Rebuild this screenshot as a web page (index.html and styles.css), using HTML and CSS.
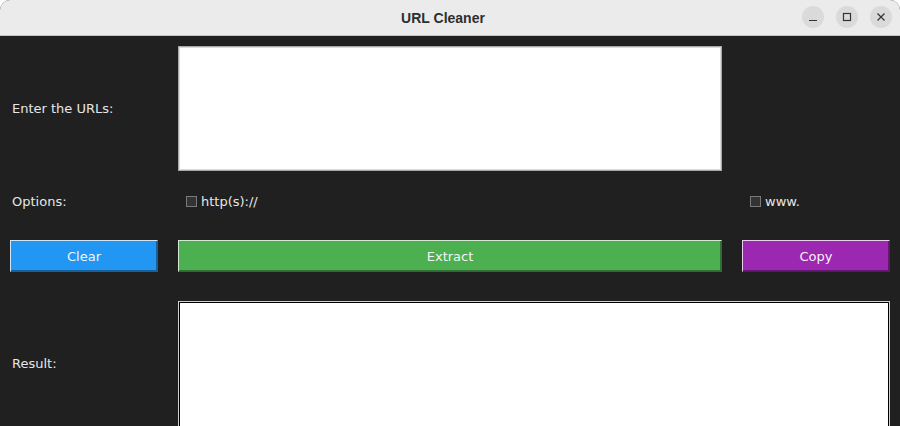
FILE: index.html
```html
<!DOCTYPE html>
<html>
<head>
<meta charset="utf-8">
<link rel="stylesheet" href="styles.css">
</head>
<body>
<div class="window">
  <div class="titlebar">
    <div class="title">URL Cleaner</div>
    <div class="controls">
      <div class="ctl"><svg width="10" height="10" viewBox="0 0 10 10"><path d="M1 8.5 H9" stroke="#333" stroke-width="1.2"/></svg></div>
      <div class="ctl"><svg width="10" height="10" viewBox="0 0 10 10"><rect x="1.5" y="1.5" width="7" height="7" fill="none" stroke="#333" stroke-width="1.2"/></svg></div>
      <div class="ctl"><svg width="10" height="10" viewBox="0 0 10 10"><path d="M1.5 1.5 L8.5 8.5 M8.5 1.5 L1.5 8.5" stroke="#333" stroke-width="1.2"/></svg></div>
    </div>
  </div>
  <div class="content">
    <div class="label r1 c1">Enter the URLs:</div>
    <div class="input-box r1 c2"></div>

    <div class="label opt r2 c1">Options:</div>
    <div class="check opt r2 c2"><span class="box"></span>http(s)://</div>
    <div class="check opt r2 c3"><span class="box"></span>www.</div>

    <div class="btn clear r3 c1">Clear</div>
    <div class="btn extract r3 c2">Extract</div>
    <div class="btn copy r3 c3">Copy</div>

    <div class="label result r4 c1">Result:</div>
    <div class="result-box result r4"></div>
  </div>
</div>
</body>
</html>
```
FILE: styles.css
```css
html, body {
  margin: 0;
  padding: 0;
  background: #ffffff;
  width: 900px;
  height: 426px;
  overflow: hidden;
}
.window {
  width: 900px;
  height: 426px;
  background: #202020;
  border-radius: 10px 10px 0 0;
  overflow: hidden;
  font-family: "DejaVu Sans", "Liberation Sans", sans-serif;
}
.titlebar {
  height: 35px;
  background: #ebebeb;
  border-bottom: 1px solid #c4c4c4;
  display: flex;
  align-items: center;
  justify-content: center;
  position: relative;
}
.title {
  font-family: "Liberation Sans", "DejaVu Sans", sans-serif;
  font-weight: bold;
  font-size: 14px;
  color: #2e2e2e;
  margin-left: -14px;
}
.controls {
  position: absolute;
  right: 8px;
  top: 6px;
  display: flex;
  gap: 12px;
}
.ctl {
  width: 22px;
  height: 22px;
  border-radius: 50%;
  background: #dadada;
  display: flex;
  align-items: center;
  justify-content: center;
}
.content {
  display: grid;
  grid-template-columns: 148px 544px 148px;
  column-gap: 20px;
  grid-template-rows: 125px 69px 32px 154px;
  padding: 10px 10px 0 10px;
}
.r1 { grid-row: 1; }
.r2 { grid-row: 2; }
.r3 { grid-row: 3; }
.r4 { grid-row: 4; }
.c1 { grid-column: 1; }
.c2 { grid-column: 2; }
.c3 { grid-column: 3; }
.label {
  color: #e6e6e6;
  font-size: 13px;
  padding-left: 2px;
  display: flex;
  align-items: center;
}
.input-box {
  background: #ffffff;
  border: 1px solid #a8a8a8;
  box-shadow: inset 0 0 0 1px #dcdcdc;
}
.opt {
  align-self: start;
  height: 20px;
  margin-top: 20px;
  display: flex;
  align-items: center;
}
.check {
  color: #e6e6e6;
  font-size: 13px;
  padding-left: 8px;
}
.box {
  display: inline-block;
  width: 9px;
  height: 9px;
  border: 1px solid #7a7a7a;
  background: #333333;
  margin-right: 4px;
}
.btn {
  display: flex;
  align-items: center;
  justify-content: center;
  color: #f4f4f4;
  font-size: 13px;
  box-sizing: border-box;
  border: 1px solid;
  box-shadow: inset -1px -1px 0 rgba(0,0,0,0.35);
}
.clear {
  background: #2196f3;
  border-color: #d0e4f4 #1c5f94 #1c5f94 #d0e4f4;
}
.extract {
  background: #4caf50;
  border-color: #d2e8d2 #2f6b31 #2f6b31 #d2e8d2;
}
.copy {
  background: #9c27b0;
  border-color: #e8cfec #5e1669 #5e1669 #e8cfec;
}
.result {
  margin-top: 29px;
}
.result-box {
  grid-column: 2 / 4;
  background: #ffffff;
  border: 1px solid #d0d0d0;
  box-shadow: inset 0 0 0 1px #000000;
  height: 140px;
}
.label.result {
  height: 125px;
  align-self: start;
}
```
